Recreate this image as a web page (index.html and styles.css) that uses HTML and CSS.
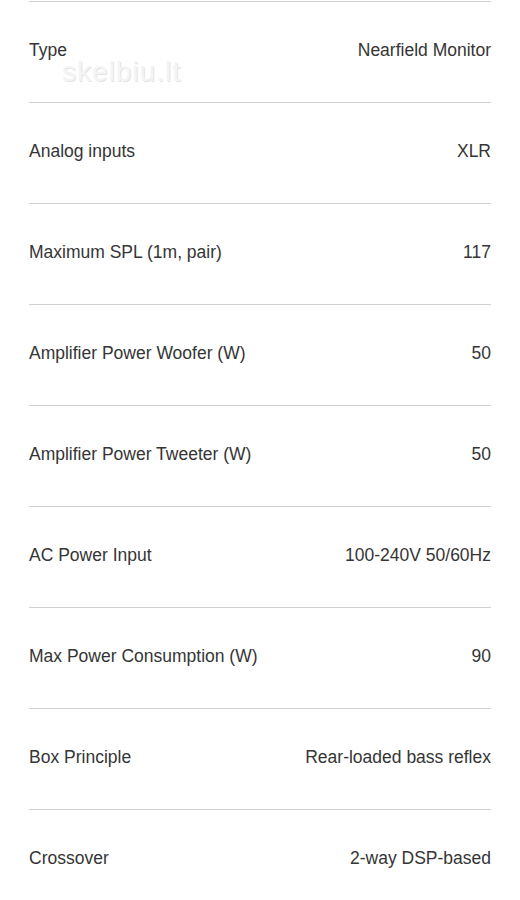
FILE: index.html
```html
<!DOCTYPE html>
<html>
<head>
<meta charset="utf-8">
<link rel="stylesheet" href="styles.css">
</head>
<body>
<div class="specs">
  <div class="top-rule"></div>
  <div class="row"><span class="label">Type</span><span class="value">Nearfield Monitor</span></div>
  <div class="row"><span class="label">Analog inputs</span><span class="value">XLR</span></div>
  <div class="row"><span class="label">Maximum SPL (1m, pair)</span><span class="value">117</span></div>
  <div class="row"><span class="label">Amplifier Power Woofer (W)</span><span class="value">50</span></div>
  <div class="row"><span class="label">Amplifier Power Tweeter (W)</span><span class="value">50</span></div>
  <div class="row"><span class="label">AC Power Input</span><span class="value">100-240V 50/60Hz</span></div>
  <div class="row"><span class="label">Max Power Consumption (W)</span><span class="value">90</span></div>
  <div class="row"><span class="label">Box Principle</span><span class="value">Rear-loaded bass reflex</span></div>
  <div class="row last"><span class="label">Crossover</span><span class="value">2-way DSP-based</span></div>
  <div class="watermark">skelbiu.lt</div>
</div>
</body>
</html>
```
FILE: styles.css
```css
html, body {
  margin: 0;
  padding: 0;
  background: #ffffff;
}
body {
  font-family: "Liberation Sans", Arial, sans-serif;
  color: #353535;
}
.specs {
  position: relative;
  padding: 0 29px;
}
.top-rule {
  height: 1px;
  margin-top: 1px;
  background: #cfcfcf;
}
.row {
  height: 101px;
  box-sizing: border-box;
  display: flex;
  align-items: center;
  justify-content: space-between;
  padding-bottom: 5px;
  border-bottom: 1px solid #cfcfcf;
  font-size: 17.5px;
  line-height: 20px;
}
.row.last {
  border-bottom: none;
}
.watermark {
  position: absolute;
  left: 62px;
  top: 55px;
  font-size: 28px;
  color: #f4f4f4;
  letter-spacing: 1px;
  text-shadow: 1px 1px 0 #e4e4e4;
}
```
